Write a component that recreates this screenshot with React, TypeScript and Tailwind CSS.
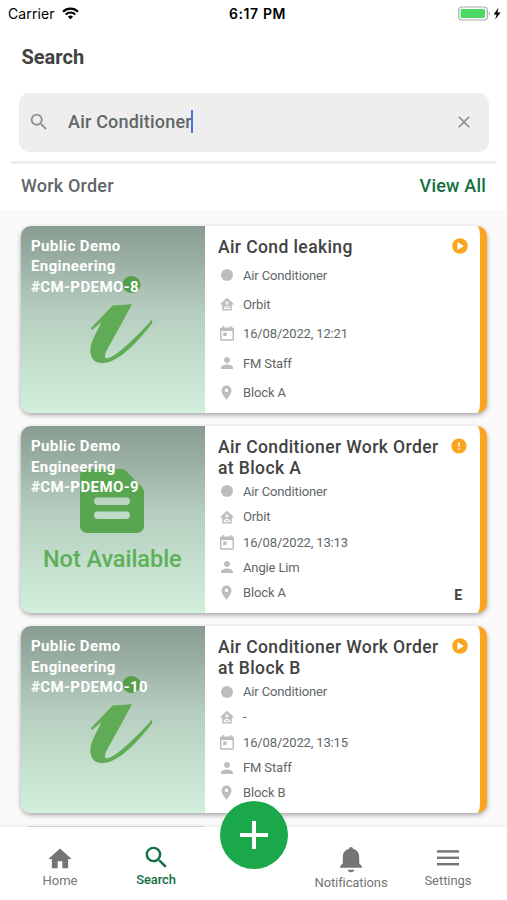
import type { ReactNode } from "react";
import {
  MdClose,
  MdError,
  MdHome,
  MdPerson,
  MdPlace,
  MdSearch,
} from "react-icons/md";

type WorkOrder = {
  id: string;
  title: string;
  asset: string;
  company: string;
  date: string;
  person: string;
  location: string;
  status: "started" | "open";
  hasImage: boolean;
  flag?: string;
};

const workOrders: WorkOrder[] = [
  {
    id: "#CM-PDEMO-8",
    title: "Air Cond leaking",
    asset: "Air Conditioner",
    company: "Orbit",
    date: "16/08/2022, 12:21",
    person: "FM Staff",
    location: "Block A",
    status: "started",
    hasImage: true,
  },
  {
    id: "#CM-PDEMO-9",
    title: "Air Conditioner Work Order at Block A",
    asset: "Air Conditioner",
    company: "Orbit",
    date: "16/08/2022, 13:13",
    person: "Angie Lim",
    location: "Block A",
    status: "open",
    hasImage: false,
    flag: "E",
  },
  {
    id: "#CM-PDEMO-10",
    title: "Air Conditioner Work Order at Block B",
    asset: "Air Conditioner",
    company: "-",
    date: "16/08/2022, 13:15",
    person: "FM Staff",
    location: "Block B",
    status: "started",
    hasImage: true,
  },
];

const WifiIcon = () => (
  <svg width="17" height="13" viewBox="0 0 17 12" fill="none" stroke="#000">
    <path d="M1 4.2a10.8 10.8 0 0 1 15 0" strokeWidth="2.2" />
    <path d="M3.7 7a6.9 6.9 0 0 1 9.6 0" strokeWidth="2" />
    <path d="M8.5 11.8 5.9 9.2a3.8 3.8 0 0 1 5.2 0z" fill="#000" stroke="none" />
  </svg>
);

const BatteryIcon = () => (
  <svg width="44" height="16" viewBox="0 0 44 16">
    <rect x="0.7" y="1" width="28.6" height="13" rx="3.2" fill="#fff" stroke="#aaa" strokeWidth="1.2" />
    <rect x="2.6" y="2.9" width="24.4" height="9.2" rx="1.4" fill="#4cd964" />
    <path d="M30.8 5.5c1.4.4 1.4 3.6 0 4z" fill="#aaa" />
    <path d="M40.6 1.6 35.6 8.4h3l-1.4 5.2 5.4-7h-3.2z" fill="#000" />
  </svg>
);

const PlayBadge = () => (
  <svg width="16" height="16" viewBox="0 0 16 16">
    <circle cx="8" cy="8" r="7.8" fill="#fba51f" />
    <path d="M5.4 4v8L12 8z" fill="#fff" />
  </svg>
);

const HouseIcon = () => (
  <svg width="14" height="14" viewBox="0 0 14 14" fill="#bdbdbd">
    <path
      fillRule="evenodd"
      d="M7 .8.4 6.700v.7h1.800v6h9.600v-6h1.800v-.7L7 .8zM7 4.200a1.800 1.800 0 1 1 0 3.600 1.800 1.800 0 0 1 0-3.600zM3.700 11.900v-.9c0-1.300 2-2 3.300-2s3.300.7 3.300 2v.9z"
    />
    <circle cx="7" cy="6" r="0.8" />
    <rect x="5.2" y="10.2" width="3.6" height="0.9" />
  </svg>
);

const CalendarIcon = () => (
  <svg width="14" height="15" viewBox="0 0 14 15" fill="#bdbdbd">
    <path
      fillRule="evenodd"
      d="M2.6 0h1.6v1.4h5.6V0h1.6v1.4h1.1c.8 0 1.5.7 1.5 1.5v10.3c0 .8-.7 1.5-1.5 1.5h-11c-.8 0-1.5-.7-1.5-1.5V2.9c0-.8.7-1.5 1.5-1.5h1.1zM1.5 4.9v8.3h11V4.9z"
    />
    <rect x="3.2" y="6.6" width="3.4" height="3.4" />
  </svg>
);

const BellIcon = () => (
  <svg width="22" height="26" viewBox="0 0 22 26" fill="currentColor">
    <path d="M11 0c1.100 0 1.900.8 1.900 1.700 3.900.9 6.300 4 6.300 8.300v6.300l2.800 3.200v1.300H0v-1.300l2.800-3.200V10c0-4.300 2.400-7.400 6.300-8.300C9.100.8 9.900 0 11 0z" />
    <path d="M7.400 22.800h7.200c-.6 1.600-1.900 2.500-3.600 2.500s-3-.9-3.600-2.500z" />
  </svg>
);

const MenuIcon = () => (
  <svg width="22" height="16" viewBox="0 0 22 16" fill="currentColor">
    <rect width="22" height="2.4" y="0.2" />
    <rect width="22" height="2.4" y="6.6" />
    <rect width="22" height="2.4" y="13" />
  </svg>
);

const InfoArtwork = () => (
  <svg className="absolute left-[66.5px] top-[47px]" width="66" height="92" viewBox="0 0 66 92">
    <ellipse cx="43.5" cy="11.5" rx="9" ry="8.6" fill="#559f4c" />
    <path
      d="M24.5 32.500 44 31.300 19 77c-2.500 4.500-3 9 .5 8.300C28 83.500 47 66 64 46.500l.3 3.500C50 69 31 88.500 16 90 6 91 1.500 84.500 2.500 75c.8-7 4.500-12.500 11-26L4 57l-1-2z"
      fill="#5fab56"
    />
  </svg>
);

const NotAvailable = () => (
  <>
    <svg className="absolute left-[59px] top-[43px]" width="64" height="64" viewBox="0 0 64 64">
      <path
        d="M6 0h35a7 7 0 0 1 5 2l16 16a7 7 0 0 1 2 5v34a7 7 0 0 1-7 7H7a7 7 0 0 1-7-7V6a6 6 0 0 1 6-6z"
        fill="#59a650"
      />
      <rect x="14" y="28.5" width="36" height="7.5" rx="3.7" fill="#bad4c3" />
      <rect x="14" y="42.5" width="36" height="7.5" rx="3.7" fill="#c0dac9" />
    </svg>
    <p className="absolute top-[117px] left-[22px] text-[23.5px] leading-8 font-medium tracking-[-0.05px] whitespace-nowrap text-[#5eb057]">
      Not Available
    </p>
  </>
);

const DetailRow = ({ icon, text }: { icon: ReactNode; text: string }) => (
  <div className="flex h-[15px] items-center text-[#bdbdbd]">
    <span className="flex w-[17px] justify-center">{icon}</span>
    <span className="ml-2 text-[13px] leading-[15px] tracking-[-0.14px] text-[#5f6769]">{text}</span>
  </div>
);

const WorkOrderCard = ({ order }: { order: WorkOrder }) => (
  <div className="flex h-[187px] shrink-0 overflow-hidden rounded-[10px] border-r-[7px] border-[#fba51f] bg-white shadow-[0_2px_5px_rgba(0,0,0,0.35)]">
    <div className="relative w-[184px] shrink-0 bg-linear-to-b from-[#889b90] via-[#b5cdbe] via-45% to-[#d1f0dc]">
      {order.hasImage ? <InfoArtwork /> : <NotAvailable />}
      <p className="relative w-[140px] pt-[10px] pl-[10px] text-[15px] leading-[20.4px] font-bold tracking-[0.4px] text-white">
        Public Demo Engineering <span className="whitespace-nowrap">{order.id}</span>
      </p>
    </div>

    <div className="relative flex flex-1 flex-col pt-[11px] pb-[13px] pl-[13px]">
      <h3 className="w-[228px] text-[17.5px] leading-[20.6px] font-medium tracking-[0.4px] text-[#424242]">
        {order.title}
      </h3>
      <div
        className={`flex flex-1 flex-col justify-between ${order.title.length > 25 ? "mt-[5.5px]" : "mt-[10px]"}`}
      >
        <DetailRow icon={<span className="size-3 rounded-full bg-[#bdbdbd]" />} text={order.asset} />
        <DetailRow icon={<HouseIcon />} text={order.company} />
        <DetailRow icon={<CalendarIcon />} text={order.date} />
        <DetailRow icon={<MdPerson size={18} className="shrink-0" />} text={order.person} />
        <DetailRow icon={<MdPlace size={17} className="shrink-0" />} text={order.location} />
      </div>
      <span className="absolute top-[11.5px] right-3 text-[#fba51f]">
        {order.status === "started" ? <PlayBadge /> : <MdError size={18} className="-mt-px" />}
      </span>
      {order.flag && (
        <span className="absolute right-[18px] bottom-[10px] text-sm leading-4 font-bold text-[#424242]">
          {order.flag}
        </span>
      )}
    </div>
  </div>
);

const NavItem = ({ icon, label, className }: { icon: ReactNode; label: string; className: string }) => (
  <div className={`flex flex-col items-center text-[13px] leading-4 ${className}`}>
    {icon}
    <span>{label}</span>
  </div>
);

const App = () => {
  return (
    <div className="flex h-[900px] w-[507px] flex-col overflow-hidden bg-white font-[Roboto,sans-serif]">
      <div className="grid h-7 shrink-0 grid-cols-3 items-center pl-2 font-[Inter,sans-serif] text-[14px] text-black">
        <div className="-mt-0.5 flex items-center gap-[7px] tracking-[0.1px]">
          <span>Carrier</span>
          <WifiIcon />
        </div>
        <span className="-mt-px text-center font-semibold tracking-[0.6px]">6:17 PM</span>
        <div className="-mt-px flex justify-end pr-[5px]">
          <BatteryIcon />
        </div>
      </div>

      <h1 className="mt-[17px] ml-[21.5px] text-xl leading-6 font-bold text-[#424242]">Search</h1>

      <div className="mt-6 mr-[18px] ml-[19px] flex h-[59px] shrink-0 items-center rounded-[10px] bg-[#eee] pr-[15px] pb-0.5 pl-[9px] text-[#8c9294]">
        <MdSearch size={22} />
        <span className="ml-[18px] text-lg font-medium tracking-[0.2px] text-[#5f6769]">Air Conditioner</span>
        <span className="-ml-px h-[23px] w-[2px] bg-[#4b6fe8]" />
        <MdClose size={20} className="ml-auto" />
      </div>

      <div className="mx-[11px] mt-[9px] h-[3px] shrink-0 bg-[#eee]" />

      <div className="flex h-[46px] shrink-0 items-center justify-between px-[21px] pb-0.5 text-lg font-medium tracking-[0.2px]">
        <h2 className="text-[#5f6769]">Work Order</h2>
        <span className="text-[#13713f]">View All</span>
      </div>

      <div className="flex min-h-0 flex-1 flex-col gap-[13.2px] overflow-hidden bg-[#fafafa] pt-4 pr-5 pl-[21px]">
        {workOrders.map((order) => (
          <WorkOrderCard key={order.id} order={order} />
        ))}
        {/* top edge of the next card, mostly hidden by the tab bar */}
        <div className="-mt-px ml-[7px] h-2 w-[177px] shrink-0 bg-[#d8dbd9]" />
      </div>

      <div className="relative flex h-[73px] shrink-0 bg-white text-[#757575] shadow-[0_-1px_4px_rgba(0,0,0,0.08)]">
        <NavItem icon={<MdHome size={28} />} label="Home" className="ml-[22px] w-[76px] pt-[17.5px]" />
        <NavItem
          icon={<MdSearch size={29} />}
          label="Search"
          className="ml-5 w-[76px] pt-4 font-medium tracking-[-0.1px] text-[#13713f]"
        />
        <NavItem
          icon={<BellIcon />}
          label="Notifications"
          className="ml-[112px] w-[90px] gap-[2px] pt-[19.5px] tracking-[-0.1px]"
        />
        <NavItem
          icon={<MenuIcon />}
          label="Settings"
          className="ml-[14px] w-[76px] gap-[7px] pt-[23px] tracking-[-0.05px]"
        />
        <button className="absolute -top-[26px] left-[220px] flex size-[68px] items-center justify-center rounded-full bg-[#1ba84b] text-white">
          <svg width="30" height="30" viewBox="0 0 30 30" fill="none" stroke="currentColor" strokeWidth="4">
            <path d="M15 1v28M1 15h28" />
          </svg>
        </button>
      </div>
    </div>
  );
};

export default App;
